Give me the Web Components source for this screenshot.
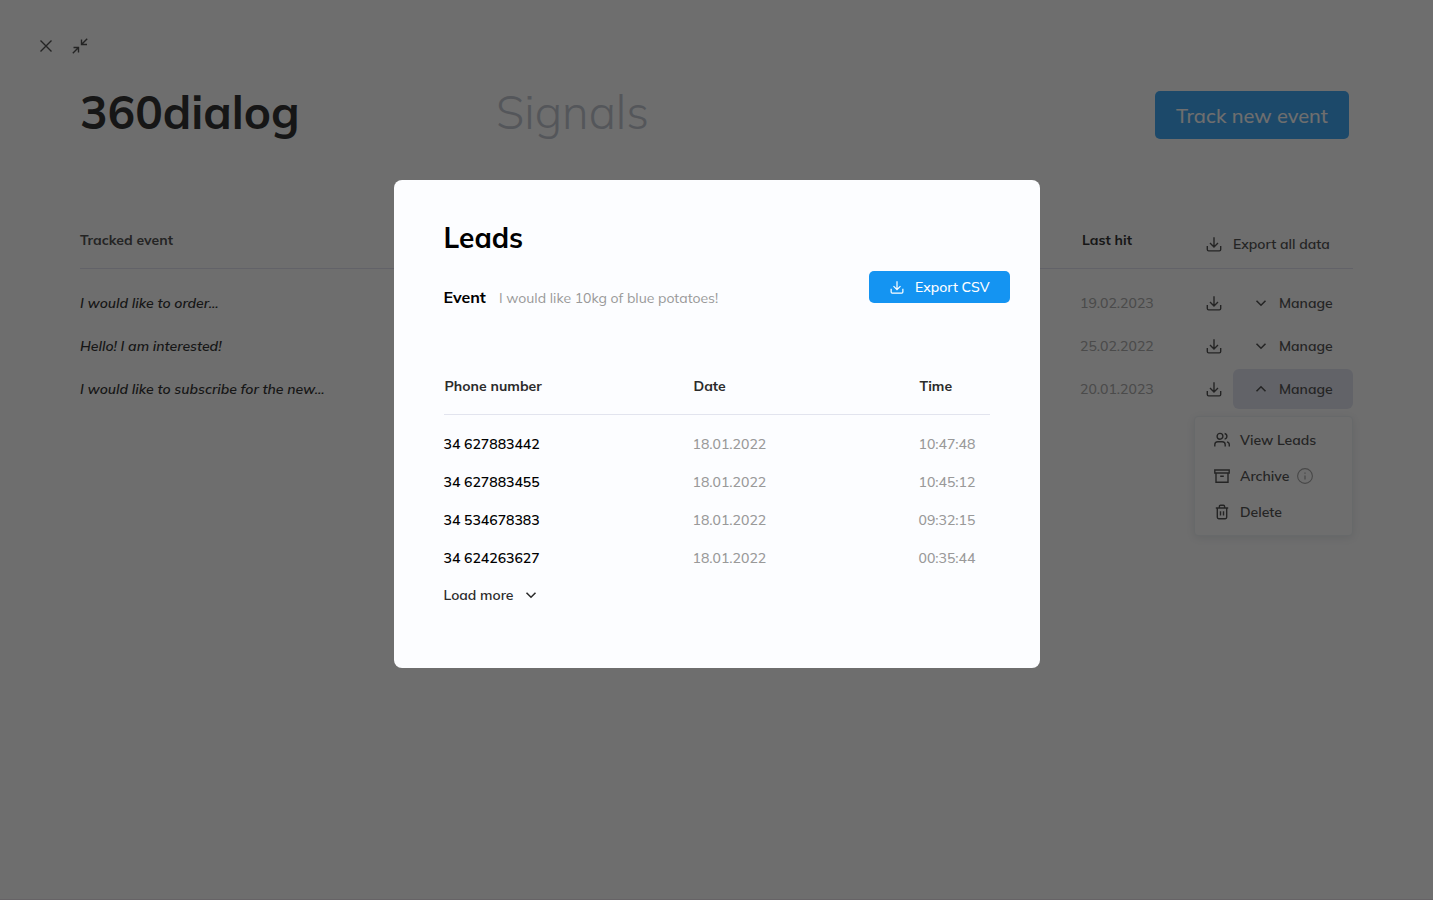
<!DOCTYPE html>
<html lang="en">
<head>
<meta charset="UTF-8">
<meta name="viewport" content="width=device-width, initial-scale=1">
<title>360dialog Signals</title>
<style>
  body {
    margin: 0;
    background: #ffffff;
    color: #2b2b2b;
    font-family: Mulish, Muli, Lato, sans-serif;
    font-size: 14px;
    line-height: 20px;
  }
</style>
</head>
<body>
<signals-app></signals-app>

<script>
const ICONS = {
  close: `<path d="M2.5 2.5l11 11M13.5 2.5l-11 11"/>`,
  shrink: `<path d="M15.2 .8L9.5 6.5M9.5 1.5v5h5.5M.8 15.2l5.7-5.7M1.5 9.5h5v5"/>`,
  download: `<path d="M8 1.3v9.4M4 7l4 4 4-4M1.3 10v3.6c0 .8.5 1.3 1.3 1.3h10.8c.8 0 1.3-.5 1.3-1.3V10"/>`,
  down: `<path stroke-width="1.6" d="M3.5 5.8L8 10.2l4.5-4.4"/>`,
  up: `<path stroke-width="1.6" d="M3.5 10.2L8 5.8l4.5 4.4"/>`,
  users: `<circle cx="6" cy="4.3" r="2.9"/><path d="M.8 14.4v-1.6c0-1.9 1.3-3 3-3h4.4c1.7 0 3 1.1 3 3v1.6M10.6 1.5c1.5.3 2.3 1.4 2.3 2.8s-.8 2.5-2.3 2.8M13 9.9c1.4.4 2.3 1.4 2.3 2.9v1.6"/>`,
  archive: `<path d="M.8 2h14.4v3H.8zM2 5v9.2h12V5M6.2 8.3h3.6"/>`,
  trash: `<path d="M1.8 4h12.4M3.3 4v9.3c0 .9.5 1.4 1.4 1.4h6.6c.9 0 1.4-.5 1.4-1.4V4M5.4 4V2.4c0-.7.4-1.1 1.1-1.1h3c.7 0 1.1.4 1.1 1.1V4M6.5 7.2v4.3M9.5 7.2v4.3"/>`,
  info: `<circle cx="8" cy="8" r="7.4" stroke-width="1.1"/><path stroke-width="1.2" d="M8 7.4v4M8 4.4v1.3"/>`,
};

class UiIcon extends HTMLElement {
  constructor() {
    super();
    this.attachShadow({ mode: "open" });
  }

  connectedCallback() {
    this.shadowRoot.innerHTML = `
      <style>
        :host { display: inline-block; width: 16px; height: 16px; flex-shrink: 0; }
        svg { display: block; width: 100%; height: 100%; overflow: visible; }
      </style>
      <svg viewBox="0 0 16 16" fill="none" stroke="currentColor" stroke-width="1.4" aria-hidden="true">
        ${ICONS[this.getAttribute("name")] || ""}
      </svg>
    `;
  }
}
customElements.define("ui-icon", UiIcon);

class UiButton extends HTMLElement {
  constructor() {
    super();
    this.attachShadow({ mode: "open" });
  }

  connectedCallback() {
    const icon = this.getAttribute("icon");
    const label = this.getAttribute("label");
    this.shadowRoot.innerHTML = `
      <style>
        :host { display: inline-block; }
        button {
          width: 100%;
          display: flex;
          align-items: center;
          gap: 10px;
          margin: 0;
          padding: 0;
          border: 0;
          border-radius: 6px;
          background: none;
          color: inherit;
          font: inherit;
          font-weight: 600;
          white-space: nowrap;
          cursor: pointer;
        }
        :host([variant="primary"]) button {
          height: 48px;
          padding: 1px 21px 0;
          background: #1494f2;
          color: #ffffff;
          font-size: 20px;
          font-weight: 500;
          border-radius: 5px;
        }
        :host([variant="small"]) button {
          height: 32px;
          padding: 0 20px;
          background: #1494f2;
          color: #ffffff;
          font-weight: 500;
          border-radius: 5px;
        }
        :host([variant="small"]) ui-icon { width: 14px; height: 14px; margin: 0 1px; }
        :host([variant="manage"]) button { height: 40px; padding: 0 20px; }
        :host([variant="head"]) button { height: 48px; gap: 11px; }
        :host([variant="more"]) button { height: 36px; flex-direction: row-reverse; }
        :host([active]) button { background: #dde0ee; }
      </style>
      <button type="button" ${label ? `aria-label="${label}"` : ""}>
        ${icon ? `<ui-icon name="${icon}"></ui-icon>` : ""}
        <slot></slot>
      </button>
    `;
  }
}
customElements.define("ui-button", UiButton);

class WindowControls extends HTMLElement {
  constructor() {
    super();
    this.attachShadow({ mode: "open" });
    this.shadowRoot.innerHTML = `
      <style>
        :host { display: flex; gap: 18px; padding: 38px 38px 0; }
      </style>
      <ui-button icon="close" label="Close"></ui-button>
      <ui-button icon="shrink" label="Exit full screen"></ui-button>
    `;
  }
}
customElements.define("window-controls", WindowControls);

class PageHeader extends HTMLElement {
  constructor() {
    super();
    this.attachShadow({ mode: "open" });
    this.shadowRoot.innerHTML = `
      <style>
        :host {
          display: grid;
          grid-template-columns: 416px 1fr auto;
          align-items: start;
          padding: 37px 84px 0 80px;
        }
        h1, p { margin: 0; font-size: 46px; line-height: 42px; }
        h1 { color: #000000; font-weight: 700; }
        p { color: #b4bac6; font-weight: 300; }
      </style>
      <h1><slot></slot></h1>
      <p><slot name="section"></slot></p>
      <slot name="action"></slot>
    `;
  }
}
customElements.define("page-header", PageHeader);

class ActionMenu extends HTMLElement {
  constructor() {
    super();
    this.attachShadow({ mode: "open" });
    this.shadowRoot.innerHTML = `
      <style>
        :host {
          display: block;
          box-sizing: border-box;
          width: 159px;
          padding: 5px 0;
          border: 1px solid #eaf0f2;
          border-radius: 4px;
          background: #ffffff;
          box-shadow: 0 2px 8px rgba(60, 80, 100, 0.16);
        }
        ul { list-style: none; margin: 0; padding: 0; }
        li { display: flex; align-items: center; gap: 8px; height: 36px; padding-left: 19px; }
        .hint { color: #909090; }
      </style>
      <ul>
        <li><ui-button icon="users">View Leads</ui-button></li>
        <li><ui-button icon="archive">Archive</ui-button><ui-icon class="hint" name="info"></ui-icon></li>
        <li><ui-button icon="trash">Delete</ui-button></li>
      </ul>
    `;
  }
}
customElements.define("action-menu", ActionMenu);

class EventTable extends HTMLElement {
  constructor() {
    super();
    this.attachShadow({ mode: "open" });
    this.events = [
      { text: "I would like to order...", hit: "19.02.2023" },
      { text: "Hello! I am interested!", hit: "25.02.2022" },
      { text: "I would like to subscribe for the new...", hit: "20.01.2023", open: true },
    ];
  }

  connectedCallback() {
    this.shadowRoot.innerHTML = `
      <style>
        :host { display: block; padding: 81px 80px 0; }
        table { width: 100%; border-collapse: separate; border-spacing: 0; table-layout: fixed; }
        col.hit { width: 126px; }
        col.save { width: 27px; }
        col.manage { width: 120px; }
        th, td { padding: 0; text-align: left; }
        th { height: 48px; border-bottom: 1px solid #dcdcec; vertical-align: top; font-weight: 700; }
        th span { display: block; padding-top: 10px; }
        th.last { padding-left: 2px; color: #000000; }
        tbody::before { content: ""; display: block; height: 12px; }
        td { height: 43px; vertical-align: middle; }
        td ui-button { display: block; }
        .event { color: #000000; font-style: italic; font-weight: 600; }
        td.hit { color: #999999; font-weight: 500; }
        .holder { position: relative; }
        action-menu { position: absolute; top: 47px; right: 0; }
      </style>
      <table>
        <colgroup><col><col class="hit"><col class="save"><col class="manage"></colgroup>
        <thead>
          <tr>
            <th scope="col"><span>Tracked event</span></th>
            <th scope="col" class="last"><span>Last hit</span></th>
            <th scope="col" colspan="2"><ui-button variant="head" icon="download">Export all data</ui-button></th>
          </tr>
        </thead>
        <tbody>
          ${this.events.map(e => `
            <tr>
              <td class="event">${e.text}</td>
              <td class="hit">${e.hit}</td>
              <td><ui-button icon="download" label="Export event data"></ui-button></td>
              <td>
                <div class="holder">
                  <ui-button variant="manage" icon="${e.open ? "up" : "down"}" ${e.open ? "active" : ""}>Manage</ui-button>
                  ${e.open ? "<action-menu></action-menu>" : ""}
                </div>
              </td>
            </tr>`).join("")}
        </tbody>
      </table>
    `;
  }
}
customElements.define("event-table", EventTable);

class LeadsDialog extends HTMLElement {
  constructor() {
    super();
    this.attachShadow({ mode: "open" });
    this.leads = [
      ["34 627883442", "18.01.2022", "10:47:48"],
      ["34 627883455", "18.01.2022", "10:45:12"],
      ["34 534678383", "18.01.2022", "09:32:15"],
      ["34 624263627", "18.01.2022", "00:35:44"],
    ];
  }

  connectedCallback() {
    this.shadowRoot.innerHTML = `
      <style>
        :host {
          position: fixed;
          inset: 0;
          display: flex;
          justify-content: center;
          align-items: flex-start;
          padding-top: 180px;
          background: rgba(34, 34, 34, 0.655);
        }
        section {
          box-sizing: border-box;
          width: 646px;
          padding: 40px 50px 55px;
          border-radius: 8px;
          background: #fcfdff;
        }
        h2 { margin: 0 0 15px; color: #000000; font-size: 28px; line-height: 36px; font-weight: 700; }
        .bar { display: flex; justify-content: space-between; align-items: flex-start; margin-right: -20px; }
        .bar p { display: flex; align-items: baseline; gap: 13px; margin: 0; padding-top: 16px; color: #999999; }
        .bar b { color: #000000; font-size: 16px; font-weight: 700; }
        table { width: 100%; margin-top: 68px; border-collapse: separate; border-spacing: 0; table-layout: fixed; }
        col.phone { width: 249px; }
        col.date { width: 226px; }
        th, td { padding: 0; text-align: left; }
        th { padding: 0 0 18px 1px; border-bottom: 1px solid #e2e4ee; font-weight: 700; }
        tbody::before { content: ""; display: block; height: 10px; }
        td { height: 38px; color: #999999; font-weight: 500; }
        td:first-child { color: #000000; font-weight: 600; }
      </style>
      <section role="dialog" aria-modal="true" aria-labelledby="title">
        <h2 id="title">Leads</h2>
        <div class="bar">
          <p><b>Event</b><span>I would like 10kg of blue potatoes!</span></p>
          <ui-button variant="small" icon="download">Export CSV</ui-button>
        </div>
        <table>
          <colgroup><col class="phone"><col class="date"><col></colgroup>
          <thead>
            <tr><th scope="col">Phone number</th><th scope="col">Date</th><th scope="col">Time</th></tr>
          </thead>
          <tbody>
            ${this.leads.map(row => `<tr>${row.map(v => `<td>${v}</td>`).join("")}</tr>`).join("")}
          </tbody>
        </table>
        <ui-button variant="more" icon="down">Load more</ui-button>
      </section>
    `;
  }
}
customElements.define("leads-dialog", LeadsDialog);

class SignalsApp extends HTMLElement {
  constructor() {
    super();
    this.attachShadow({ mode: "open" });
    this.shadowRoot.innerHTML = `
      <style>
        :host { display: block; box-sizing: border-box; min-height: 100vh; border-bottom: 1px solid #e8dfe8; }
      </style>
      <window-controls></window-controls>
      <page-header>
        360dialog
        <span slot="section">Signals</span>
        <ui-button slot="action" variant="primary">Track new event</ui-button>
      </page-header>
      <event-table></event-table>
      <leads-dialog></leads-dialog>
    `;
  }
}
customElements.define("signals-app", SignalsApp);
</script>
</body>
</html>
